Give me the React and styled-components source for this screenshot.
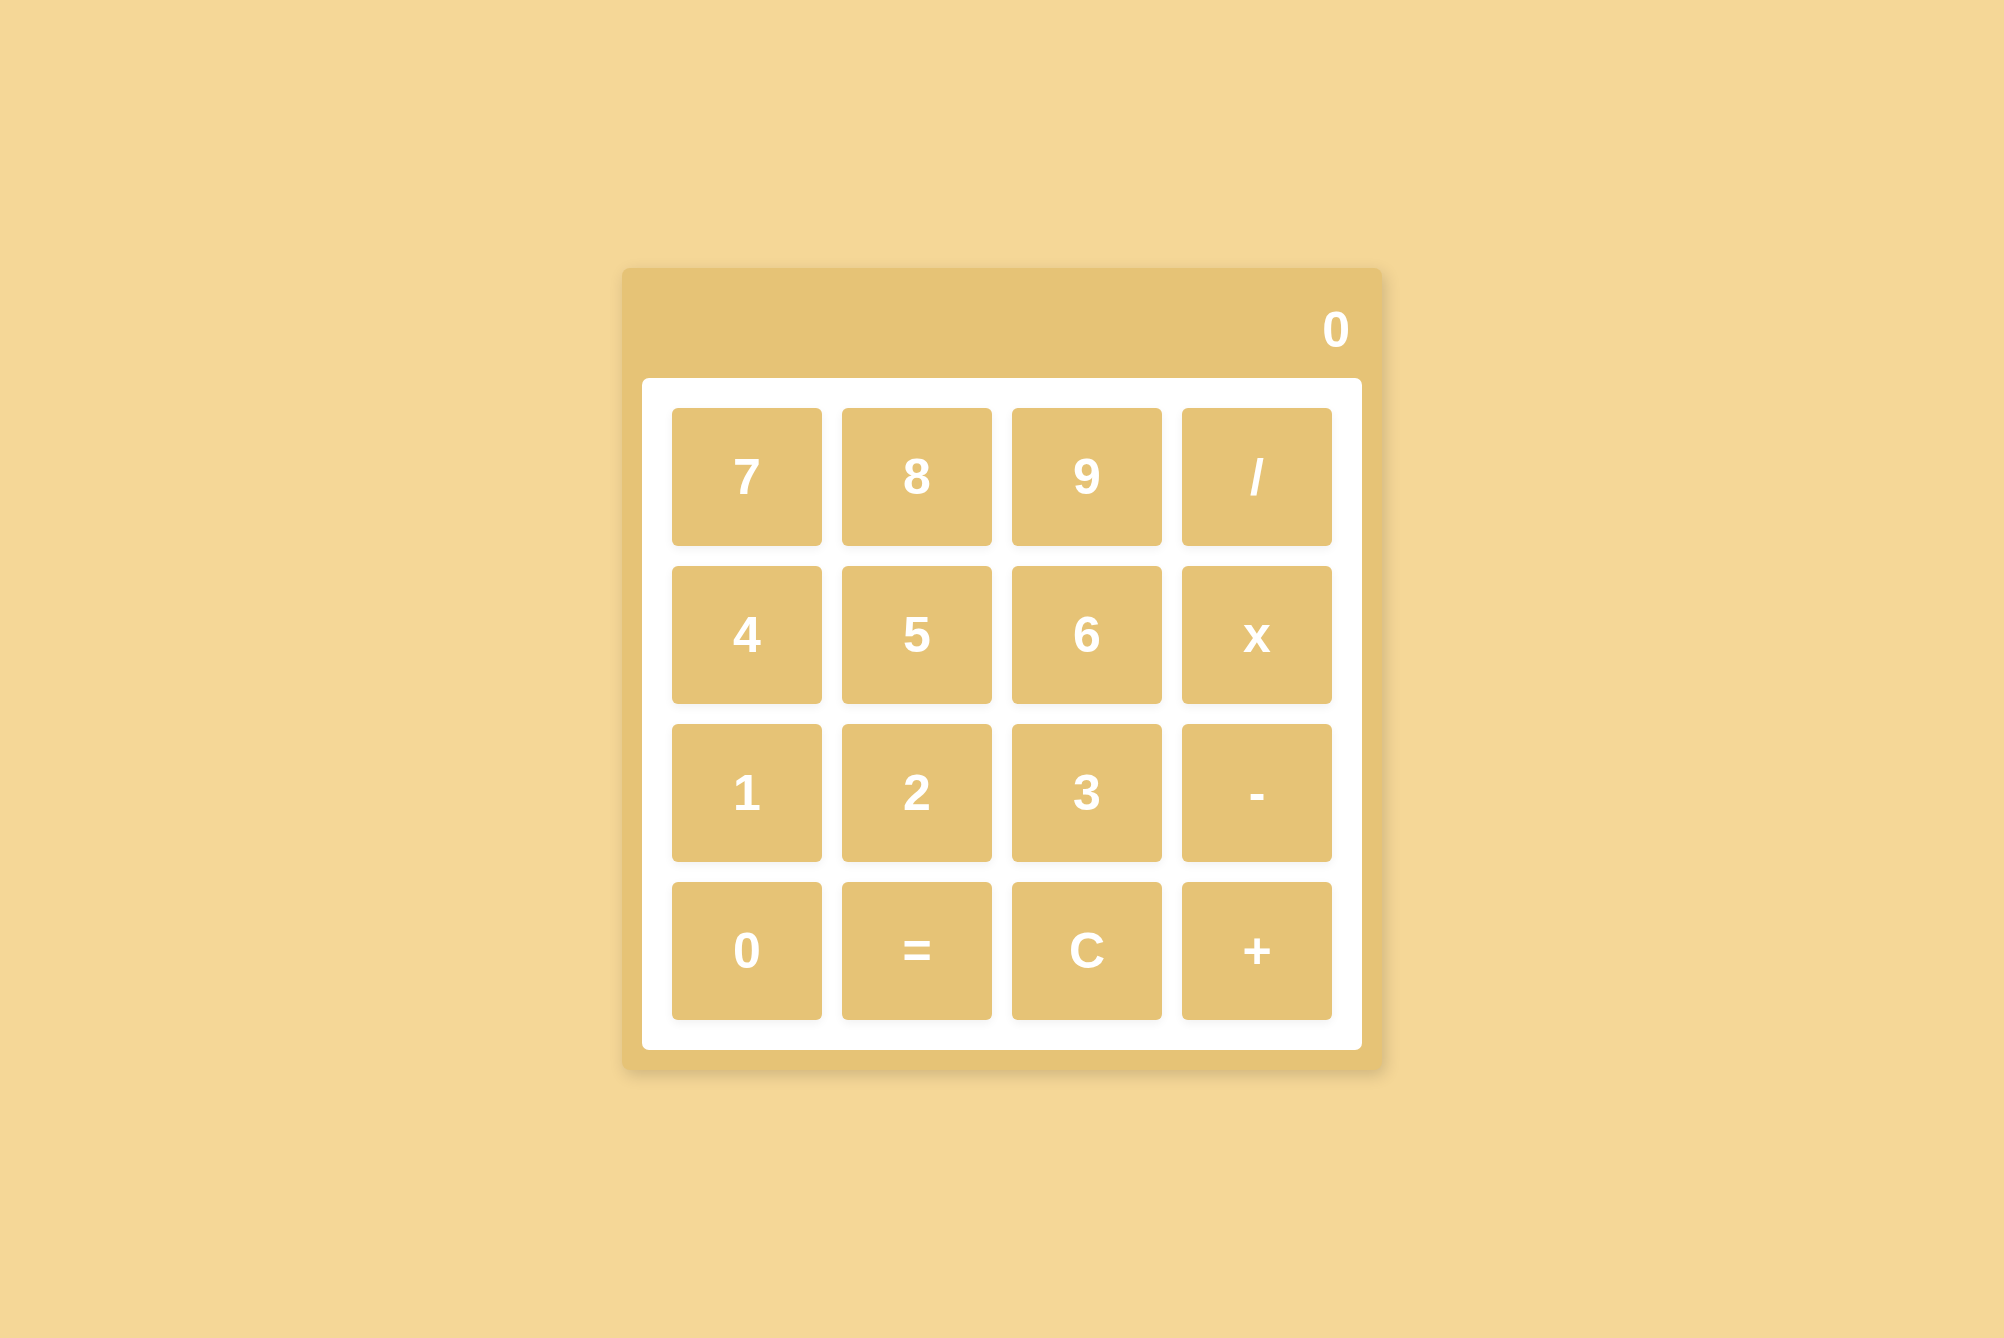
import React from "react";
import styled, { createGlobalStyle } from "styled-components";

const Global = createGlobalStyle`
  html, body { margin: 0; padding: 0; height: 100%; }
  body { background: #f5d797; font-family: "Liberation Sans", Arial, sans-serif; }
  #root { height: 100%; }
`;

const Page = styled.div`
  height: 100vh;
  display: flex;
  align-items: center;
  justify-content: center;
`;

const Calculator = styled.div`
  width: 760px;
  box-sizing: border-box;
  background: #e6c376;
  border-radius: 8px;
  padding: 0 20px 20px;
  box-shadow: 3px 5px 16px rgba(0, 0, 0, 0.16);
  display: flex;
  flex-direction: column;
`;

const Display = styled.div`
  height: 110px;
  box-sizing: border-box;
  display: flex;
  align-items: center;
  justify-content: flex-end;
  padding: 13px 12px 0 0;
  color: #fff;
  font-weight: 700;
  font-size: 50px;
  line-height: 1;
`;

const Keypad = styled.div`
  background: #fff;
  border-radius: 7px;
  padding: 30px;
  display: grid;
  grid-template-columns: repeat(4, 150px);
  grid-auto-rows: 138px;
  gap: 20px;
`;

const Key = styled.button`
  border: none;
  border-radius: 6px;
  background: #e6c376;
  color: #fff;
  font-family: "Liberation Sans", Arial, sans-serif;
  font-weight: 700;
  font-size: 50px;
  display: flex;
  align-items: center;
  justify-content: center;
  padding: 0;
  box-shadow: 0 3px 10px rgba(0, 0, 0, 0.06);
  cursor: pointer;
`;

const keys = ["7", "8", "9", "/", "4", "5", "6", "x", "1", "2", "3", "-", "0", "=", "C", "+"];

export default function App() {
  return (
    <Page>
      <Global />
      <Calculator>
        <Display>0</Display>
        <Keypad>
          {keys.map((k) => (
            <Key key={k}>{k}</Key>
          ))}
        </Keypad>
      </Calculator>
    </Page>
  );
}
